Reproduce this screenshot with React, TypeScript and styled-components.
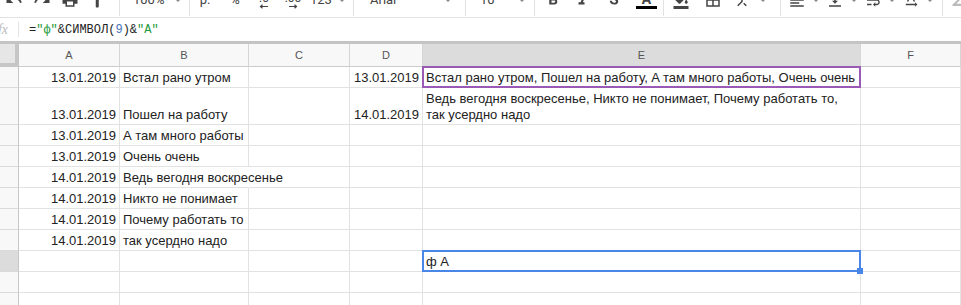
import React from "react"
import styled, { createGlobalStyle, css } from "styled-components"
import {
	MdUndo,
	MdRedo,
	MdPrint,
	MdFormatPaint,
	MdArrowDropDown,
	MdFormatBold,
	MdFormatItalic,
	MdStrikethroughS,
	MdFormatColorFill,
	MdBorderAll,
	MdCallMerge,
	MdFormatAlignLeft,
	MdVerticalAlignBottom,
	MdWrapText,
	MdTextRotationNone,
	MdFunctions,
} from "react-icons/md"

const GlobalStyle = createGlobalStyle`
	body {
		margin: 0;
		background: #fff;
		font-family: "Liberation Sans", Arial, sans-serif;
	}
`

const Page = styled.div`
	width: 961px;
	height: 305px;
	overflow: hidden;
	background: #fff;
`

// Toolbar: only the lower edge is in the shot, so the row is centred on y=0
const Toolbar = styled.div`
	height: 17px;
	border-bottom: 1px solid #e2e2e2;
	overflow: hidden;
`

const ToolRow = styled.div`
	display: flex;
	align-items: center;
	height: 34px;
	margin-top: -17px;
	color: #444;
	font-size: 13px;
	font-family: Roboto, "Liberation Sans", sans-serif;
`

const ToolGroup = styled.div<{ $w?: number; $pad?: number }>`
	display: flex;
	align-items: center;
	flex: ${(p) => (p.$w ? "none" : "1")};
	width: ${(p) => (p.$w ? `${p.$w}px` : "auto")};
	padding-left: ${(p) => p.$pad ?? 0}px;
	box-sizing: border-box;
	height: 100%;
`

const ToolSep = styled.div`
	flex: none;
	width: 1px;
	height: 32px;
	background: #e2e2e2;
`

const ToolBtn = styled.div<{ $w: number }>`
	flex: none;
	width: ${(p) => p.$w}px;
	display: flex;
	flex-direction: column;
	align-items: center;
	justify-content: center;
	svg {
		width: 18px;
		height: 18px;
	}
`

const ToolText = styled.span<{ $ml?: number }>`
	margin-left: ${(p) => p.$ml ?? 0}px;
	line-height: 14px;
`

const Caret = styled(MdArrowDropDown)<{ $ml?: string }>`
	flex: none;
	width: 16px;
	height: 16px;
	color: #888;
	margin-left: ${(p) => p.$ml ?? "0"};
`

const DecText = styled.span`
	font-size: 12px;
	line-height: 12px;
`

const ColorBar = styled.div`
	width: 21px;
	height: 3px;
	background: #000;
`

const GlyphA = styled.span`
	font-size: 14px;
	line-height: 14px;
	font-weight: bold;
`

// Formula bar
const FormulaBar = styled.div`
	display: flex;
	align-items: center;
	height: 23px;
	border-bottom: 3px solid #c4c4c4;
`

const FxBox = styled.div`
	width: 18px;
	padding-right: 10px;
	box-sizing: border-box;
	overflow: hidden;
	display: flex;
	justify-content: flex-end;
	color: #bbb;
	font: italic 14px "Liberation Serif", serif;
`

const FxDivider = styled.div`
	width: 1px;
	height: 15px;
	background: #e4e4e4;
`

const Formula = styled.div`
	padding-left: 10px;
	font: 12px "Liberation Mono", monospace;
	color: #222;
	white-space: pre;
`

const Tok = styled.span<{ $kind: "str" | "num" }>`
	color: ${(p) => (p.$kind === "str" ? "#1f9a3a" : "#4a73b8")};
`

// Grid
const Sheet = styled.div`
	display: grid;
	grid-template-columns: 19px 101px 129px 101px 73px 438px 100px;
`

const Corner = styled.div`
	height: 23px;
	box-sizing: border-box;
	background: #e6e6e6;
	border-right: 4px solid #c6c6c6;
	border-bottom: 4px solid #c6c6c6;
`

const ColHead = styled.div<{ $active?: boolean }>`
	display: flex;
	align-items: center;
	justify-content: center;
	height: 23px;
	box-sizing: border-box;
	background: ${(p) => (p.$active ? "#dcdcdc" : "#f8f8f8")};
	border-right: 1px solid #d6d6d6;
	border-bottom: 1px solid #cccccc;
	font-size: 11px;
	color: #555;
`

const RowHead = styled.div<{ $h: number; $active?: boolean }>`
	height: ${(p) => p.$h}px;
	box-sizing: border-box;
	background: ${(p) => (p.$active ? "#dcdcdc" : "#f8f8f8")};
	border-right: 1px solid #c6c6c6;
	border-bottom: 1px solid #dadada;
`

const Cell = styled.div<{
	$h: number
	$right?: boolean
	$wrap?: boolean
	$spill?: boolean
	$mark?: string
}>`
	position: relative;
	display: flex;
	align-items: flex-end;
	justify-content: ${(p) => (p.$right ? "flex-end" : "flex-start")};
	height: ${(p) => p.$h}px;
	min-width: 0;
	box-sizing: border-box;
	padding: 0 3px 1px;
	border-right: 1px solid ${(p) => (p.$spill ? "transparent" : "#e2e2e2")};
	border-bottom: 1px solid #e2e2e2;
	font-size: 13px;
	line-height: 16px;
	color: #222;
	white-space: ${(p) => (p.$wrap ? "normal" : "nowrap")};
	${(p) =>
		p.$mark &&
		css`
			&::after {
				content: "";
				position: absolute;
				left: -1px;
				top: -1px;
				right: -1px;
				bottom: -1px;
				border: 2px solid ${p.$mark};
				pointer-events: none;
			}
		`}
`

const FillHandle = styled.div`
	position: absolute;
	right: -3px;
	bottom: -3px;
	width: 6px;
	height: 6px;
	background: #4a86e8;
	z-index: 1;
`

type RowData = {
	h: number
	a?: string
	b?: string
	d?: string
	e?: string
}

const rows: RowData[] = [
	{
		h: 21,
		a: "13.01.2019",
		b: "Встал рано утром",
		d: "13.01.2019",
		e: "Встал рано утром, Пошел на работу, A там много работы, Очень очень",
	},
	{
		h: 37,
		a: "13.01.2019",
		b: "Пошел на работу",
		d: "14.01.2019",
		e: "Ведь вегодня воскресенье, Никто не понимает, Почему работать то, так усердно надо",
	},
	{ h: 21, a: "13.01.2019", b: "А там много работы" },
	{ h: 21, a: "13.01.2019", b: "Очень очень" },
	{ h: 21, a: "14.01.2019", b: "Ведь вегодня воскресенье" },
	{ h: 21, a: "14.01.2019", b: "Никто не понимает" },
	{ h: 21, a: "14.01.2019", b: "Почему работать то" },
	{ h: 21, a: "14.01.2019", b: "так усердно надо" },
	{ h: 21, e: "ф A" },
	{ h: 21 },
	{ h: 21 },
]

const ACTIVE_ROW = 8

const DecArrow = ({ left }: { left?: boolean }) => (
	<svg width="10" height="5" viewBox="0 0 10 5" style={{ width: 10, height: 5 }}>
		{left ? (
			<path d="M9 2.5H2M3.5 0.8L1.5 2.5L3.5 4.2" stroke="#444" fill="none" strokeWidth="1.2" />
		) : (
			<path d="M1 2.5H8M6.5 0.8L8.5 2.5L6.5 4.2" stroke="#444" fill="none" strokeWidth="1.2" />
		)}
	</svg>
)

const TopToolbar = () => (
	<Toolbar>
		<ToolRow>
			<ToolGroup $w={119}>
				<ToolBtn $w={28}><MdUndo /></ToolBtn>
				<ToolBtn $w={28}><MdRedo /></ToolBtn>
				<ToolBtn $w={28}><MdPrint /></ToolBtn>
				<ToolBtn $w={28}><MdFormatPaint /></ToolBtn>
			</ToolGroup>
			<ToolSep />
			<ToolGroup $w={69} $pad={13}>
				<ToolText>100%</ToolText>
				<Caret $ml="6px" />
			</ToolGroup>
			<ToolSep />
			<ToolGroup $w={163}>
				<ToolBtn $w={30}><ToolText>р.</ToolText></ToolBtn>
				<ToolBtn $w={30}><ToolText>%</ToolText></ToolBtn>
				<ToolBtn $w={28}>
					<DecText>.0</DecText>
					<DecArrow left />
				</ToolBtn>
				<ToolBtn $w={30}>
					<DecText>.00</DecText>
					<DecArrow />
				</ToolBtn>
				<ToolText $ml={2}>123</ToolText>
				<Caret $ml="2px" />
			</ToolGroup>
			<ToolSep />
			<ToolGroup $w={111} $pad={16}>
				<ToolText>Arial</ToolText>
				<Caret $ml="auto" style={{ marginRight: 9 }} />
			</ToolGroup>
			<ToolSep />
			<ToolGroup $w={68} $pad={14}>
				<ToolText>10</ToolText>
				<Caret $ml="auto" style={{ marginRight: 4 }} />
			</ToolGroup>
			<ToolSep />
			<ToolGroup $w={128} $pad={3}>
				<ToolBtn $w={30}><MdFormatBold /></ToolBtn>
				<ToolBtn $w={29}><MdFormatItalic /></ToolBtn>
				<ToolBtn $w={33}><MdStrikethroughS /></ToolBtn>
				<ToolBtn $w={33}>
					<GlyphA>A</GlyphA>
					<ColorBar />
				</ToolBtn>
			</ToolGroup>
			<ToolSep />
			<ToolGroup $w={116} $pad={1}>
				<ToolBtn $w={32}><MdFormatColorFill /></ToolBtn>
				<ToolBtn $w={32}><MdBorderAll /></ToolBtn>
				<ToolBtn $w={26}><MdCallMerge /></ToolBtn>
				<Caret />
			</ToolGroup>
			<ToolSep />
			<ToolGroup $w={161} $pad={6}>
				<ToolBtn $w={20}><MdFormatAlignLeft /></ToolBtn>
				<Caret $ml="1px" />
				<ToolBtn $w={22}><MdVerticalAlignBottom /></ToolBtn>
				<Caret />
				<ToolBtn $w={22}><MdWrapText /></ToolBtn>
				<Caret />
				<ToolBtn $w={22}><MdTextRotationNone /></ToolBtn>
				<Caret />
			</ToolGroup>
			<ToolSep />
			<ToolGroup $pad={4}>
				<ToolBtn $w={20} style={{ color: "#bbb" }}><MdFunctions /></ToolBtn>
			</ToolGroup>
		</ToolRow>
	</Toolbar>
)

const App = () => {
	return (
		<Page>
			<GlobalStyle />
			<TopToolbar />
			<FormulaBar>
				<FxBox>fx</FxBox>
				<FxDivider />
				<Formula>
					=<Tok $kind="str">"ф"</Tok>&amp;СИМВОЛ(<Tok $kind="num">9</Tok>)&amp;
					<Tok $kind="str">"A"</Tok>
				</Formula>
			</FormulaBar>
			<Sheet>
				<Corner />
				{["A", "B", "C", "D", "E", "F"].map((letter) => (
					<ColHead key={letter} $active={letter === "E"}>
						{letter}
					</ColHead>
				))}
				{rows.map((row, i) => (
					<React.Fragment key={i}>
						<RowHead $h={row.h} $active={i === ACTIVE_ROW} />
						<Cell $h={row.h} $right>{row.a}</Cell>
						<Cell $h={row.h} $spill={i === 4}>{row.b}</Cell>
						<Cell $h={row.h} />
						<Cell $h={row.h} $right>{row.d}</Cell>
						<Cell
							$h={row.h}
							$wrap={i === 1}
							$mark={i === 0 ? "#9b59b6" : i === ACTIVE_ROW ? "#4a86e8" : undefined}
						>
							{row.e}
							{i === ACTIVE_ROW && <FillHandle />}
						</Cell>
						<Cell $h={row.h} />
					</React.Fragment>
				))}
			</Sheet>
		</Page>
	)
}

export default App
